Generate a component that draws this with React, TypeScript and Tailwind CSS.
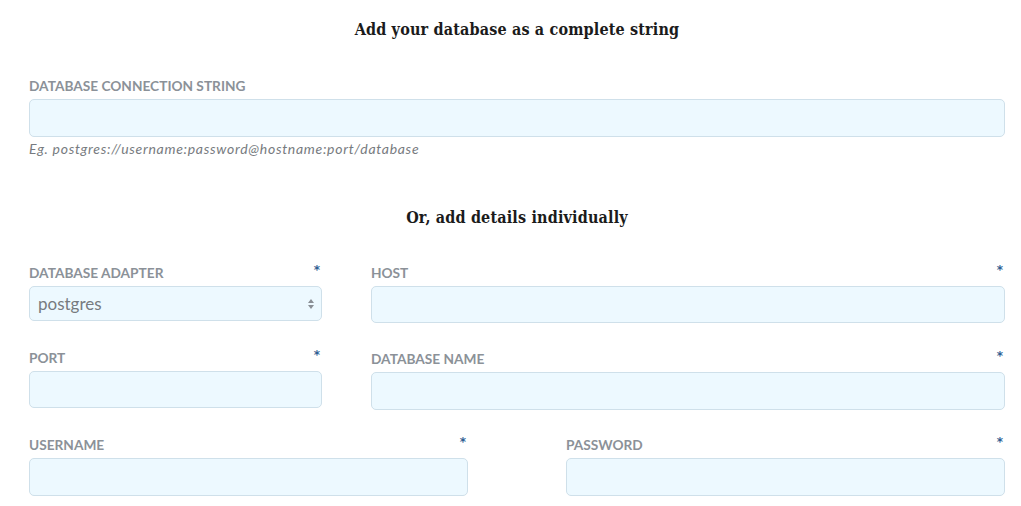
import React from "react";

const labelCls =
  "text-[13.7px] font-bold uppercase text-[#8b9198] leading-none";
const inputCls =
  "w-full rounded-[5px] border border-[#cfe0ea] bg-[#edf9ff]";

function Label({ text, req = true }: { text: string; req?: boolean }) {
  return (
    <div className="flex items-start justify-between h-[14px] mb-[6px] pr-[2px]">
      <span className={labelCls}>{text}</span>
      {req && (
        <span className="text-[12px] leading-none text-[#2f5f93] font-bold mt-[-2px]" style={{ fontFamily: "'DejaVu Sans', sans-serif" }}>
          *
        </span>
      )}
    </div>
  );
}

function Field({ text, h }: { text: string; h: string }) {
  return (
    <div className="flex flex-col">
      <Label text={text} />
      <div className={inputCls + " " + h} />
    </div>
  );
}

const headFont = { fontFamily: "'DejaVu Serif Condensed', 'DejaVu Serif', serif" };

export default function App() {
  return (
    <div
      className="w-[1021px] h-[506px] bg-white pl-[29px] pr-[16px] overflow-hidden"
      style={{ fontFamily: "Lato, 'Open Sans', sans-serif" }}
    >
      <h2
        className="text-center text-[16px] font-bold text-[#1b1b1b] pt-[20px] leading-[20px] tracking-[0.01em]"
        style={headFont}
      >
        Add your database as a complete string
      </h2>
      <div className="mt-[39px]">
        <div className={labelCls + " h-[14px] mb-[6px]"}>Database connection string</div>
        <div className={inputCls + " h-[38px]"} />
        <div className="mt-[4px] text-[14px] italic text-[#777b80] leading-[16px] tracking-[0.05em]">
          Eg. postgres://username:password@hostname:port/database
        </div>
      </div>
      <h2
        className="text-center text-[16px] font-bold text-[#1b1b1b] mt-[51px] leading-[20px] tracking-[0.01em]"
        style={headFont}
      >
        Or, add details individually
      </h2>
      <div className="mt-[38px] flex gap-[49px]">
        <div className="w-[293px] flex flex-col gap-[30px]">
          <div className="flex flex-col">
            <Label text="Database adapter" />
            <div className={inputCls + " h-[35px] border-[#bfd0dc] flex items-center justify-between pl-[8px] pr-[6px]"}>
              <span className="text-[17px] text-[#777b80]">postgres</span>
              <svg width="8" height="14" viewBox="0 0 8 14">
                <path d="M4 2 L7 6 L1 6 Z" fill="#8a8f95" />
                <path d="M4 12 L7 8 L1 8 Z" fill="#8a8f95" />
              </svg>
            </div>
          </div>
          <Field text="Port" h="h-[37px]" />
        </div>
        <div className="flex-1 flex flex-col gap-[29px]">
          <Field text="Host" h="h-[37px]" />
          <Field text="Database name" h="h-[38px]" />
        </div>
      </div>
      <div className="mt-[28px] flex gap-[98px]">
        <div className="flex-1">
          <Field text="Username" h="h-[38px]" />
        </div>
        <div className="flex-1">
          <Field text="Password" h="h-[38px]" />
        </div>
      </div>
    </div>
  );
}
